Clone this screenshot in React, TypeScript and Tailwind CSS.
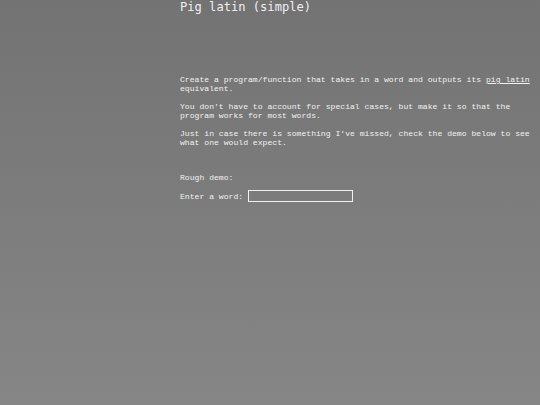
export default function App() {
  return (
    <div className="min-h-[405px] w-[540px] bg-gradient-to-b from-[#737373] to-[#868686] pl-[180px] text-[#f2f2f2]">
      <div className="w-[360px]">
        <h1 className="text-[12.1px] leading-[14px] pt-0 text-[#f0f0f0]" style={{ fontFamily: '"DejaVu Sans Mono", monospace' }}>
          Pig latin (simple)
        </h1>
        <div className="pt-[61px] text-[8.1px] leading-[9px]" style={{ fontFamily: '"Liberation Mono", monospace' }}>
          <p>
            Create a program/function that takes in a word and outputs its{" "}
            <span className="underline">pig latin</span> equivalent.
          </p>
          <p className="mt-[9px]">
            You don't have to account for special cases, but make it so that the program works for most words.
          </p>
          <p className="mt-[9px]">
            Just in case there is something I've missed, check the demo below to see what one would expect.
          </p>
          <p className="mt-[26px]">Rough demo:</p>
          <div className="mt-[8px] flex items-center gap-[5px]">
            <span>Enter a word:</span>
            <input className="h-[12px] w-[105px] border border-[#f0f0f0] bg-transparent outline-none" />
          </div>
        </div>
      </div>
    </div>
  );
}
